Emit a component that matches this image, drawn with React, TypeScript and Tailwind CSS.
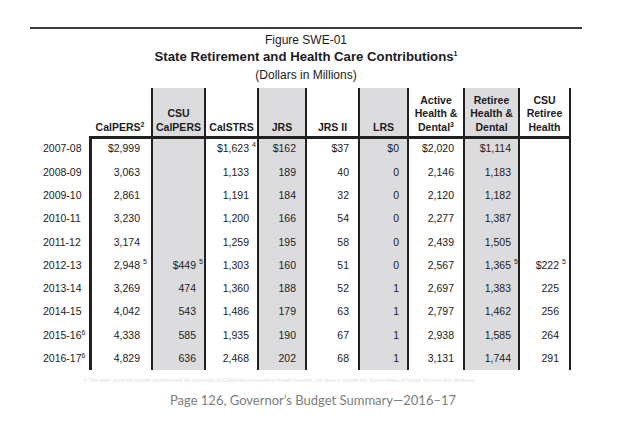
import React from 'react';

type Cell = [string, string?];

interface Column {
  label: React.ReactNode;
  width: string;
  pad: string;
  shaded?: boolean;
}

const columns: Column[] = [
  { label: <>CalPERS<sup className="text-[7px]">2</sup></>, width: 'w-[62px]', pad: 'pr-[11px]' },
  { label: <>CSU<br />CalPERS</>, width: 'w-[53px]', pad: 'pr-[8px]', shaded: true },
  { label: 'CalSTRS', width: 'w-[53px]', pad: 'pr-[8px]' },
  { label: 'JRS', width: 'w-[48px]', pad: 'pr-[9px]', shaded: true },
  { label: 'JRS II', width: 'w-[53px]', pad: 'pr-[9px]' },
  { label: 'LRS', width: 'w-[49px]', pad: 'pr-[8px]', shaded: true },
  { label: <>Active<br />Health &amp;<br />Dental<sup className="text-[7px]">3</sup></>, width: 'w-[56px]', pad: 'pr-[9px]' },
  { label: <>Retiree<br />Health &amp;<br />Dental</>, width: 'w-[55px]', pad: 'pr-[7px]', shaded: true },
  { label: <>CSU<br />Retiree<br />Health</>, width: 'w-[53px]', pad: 'pr-[10px]' },
];

const rows: { year: string; sup?: string; cells: Cell[] }[] = [
  { year: '2007-08', cells: [['$2,999'], [''], ['$1,623', '4'], ['$162'], ['$37'], ['$0'], ['$2,020'], ['$1,114'], ['']] },
  { year: '2008-09', cells: [['3,063'], [''], ['1,133'], ['189'], ['40'], ['0'], ['2,146'], ['1,183'], ['']] },
  { year: '2009-10', cells: [['2,861'], [''], ['1,191'], ['184'], ['32'], ['0'], ['2,120'], ['1,182'], ['']] },
  { year: '2010-11', cells: [['3,230'], [''], ['1,200'], ['166'], ['54'], ['0'], ['2,277'], ['1,387'], ['']] },
  { year: '2011-12', cells: [['3,174'], [''], ['1,259'], ['195'], ['58'], ['0'], ['2,439'], ['1,505'], ['']] },
  { year: '2012-13', cells: [['2,948', '5'], ['$449', '5'], ['1,303'], ['160'], ['51'], ['0'], ['2,567'], ['1,365', '5'], ['$222', '5']] },
  { year: '2013-14', cells: [['3,269'], ['474'], ['1,360'], ['188'], ['52'], ['1'], ['2,697'], ['1,383'], ['225']] },
  { year: '2014-15', cells: [['4,042'], ['543'], ['1,486'], ['179'], ['63'], ['1'], ['2,797'], ['1,462'], ['256']] },
  { year: '2015-16', sup: '6', cells: [['4,338'], ['585'], ['1,935'], ['190'], ['67'], ['1'], ['2,938'], ['1,585'], ['264']] },
  { year: '2016-17', sup: '6', cells: [['4,829'], ['636'], ['2,468'], ['202'], ['68'], ['1'], ['3,131'], ['1,744'], ['291']] },
];

// border of a column: first one only on the body, last one closes the table
const borderFor = (i: number, header: boolean) => {
  if (i === 0) return header ? '' : 'border-l-[3px] border-[#231f20]';
  if (i === columns.length - 1) return 'border-l-2 border-r-2 border-[#231f20]';
  return 'border-l-2 border-[#231f20]';
};

export default function App() {
  return (
    <div className="w-[618px] h-[429px] bg-white overflow-hidden font-['Liberation_Sans',Arial,sans-serif] text-[#1c1b1d]">
      <div className="ml-[30px] w-[552px] pt-[27px]">
        <div className="border-t-2 border-[#3d3d3d]" />
        <div className="mt-[4px] text-center text-[12px] leading-[14px]">Figure SWE-01</div>
        <div className="mt-[2px] text-center text-[13.2px] leading-[16px] font-bold">
          State Retirement and Health Care Contributions<sup className="text-[7px] top-[-5px]">1</sup>
        </div>
        <div className="mt-[3px] text-center text-[12px] leading-[14px]">(Dollars in Millions)</div>

        <div className="mt-[6px] w-[541px]">
          <div className="flex">
            <div className="w-[59px] shrink-0" />
            <div className="flex border-b-[3px] border-[#231f20]">
              {columns.map((c, i) => (
                <div
                  key={i}
                  className={`${c.width} ${borderFor(i, true)} ${c.shaded ? 'bg-[#dcdcde]' : ''} h-[48px] shrink-0 flex items-end justify-center pb-[2px] text-center text-[10.5px] leading-[13.5px] font-bold`}
                >
                  <div>{c.label}</div>
                </div>
              ))}
            </div>
          </div>

          {rows.map((r, ri) => (
            <div key={r.year} className={`flex text-[10.5px] ${ri === 0 ? 'h-[22px]' : 'h-[23.28px]'}`}>
              <div className={`w-[59px] shrink-0 pl-[13px] flex items-center ${ri === 0 ? 'pb-[3px]' : ''}`}>
                <span>
                  {r.year}
                  {r.sup && <sup className="text-[7px]">{r.sup}</sup>}
                </span>
              </div>
              {r.cells.map(([v, s], ci) => {
                const c = columns[ci];
                return (
                  <div
                    key={ci}
                    className={`${c.width} ${borderFor(ci, false)} ${c.pad} ${c.shaded ? 'bg-[#dcdcde]' : ''} shrink-0 flex items-center justify-end ${ri === 0 ? 'pb-[3px]' : ''}`}
                  >
                    <span className="relative">
                      {v}
                      {s && <span className="absolute left-full top-0 ml-[3px] text-[7px] leading-[7px]">{s}</span>}
                    </span>
                  </div>
                );
              })}
            </div>
          ))}
        </div>

        <div className="mt-[8px] ml-[53px] text-[5.3px] leading-[4px] whitespace-nowrap text-[#e0e0e0]">
          1/ The chart does not include contributions for University of California retirement or health benefits, nor does it include the State's share of Social Security and Medicare.
        </div>

        <div className="mt-[9px] text-center pl-[14px] font-['Lato',sans-serif] text-[13px] leading-[18px] text-[#7d7d7d]">
          Page 126, Governor’s Budget Summary—2016–17
        </div>
      </div>
    </div>
  );
}
